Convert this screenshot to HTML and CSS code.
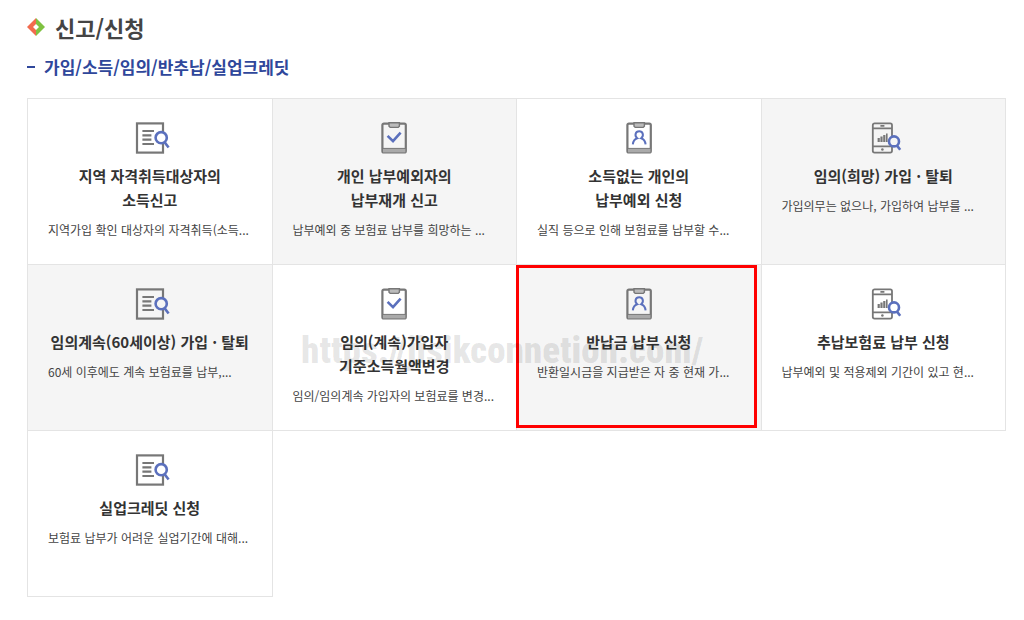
FILE: index.html
```html
<!DOCTYPE html>
<html lang="ko">
<head>
    <meta charset="UTF-8">
    <meta name="viewport" content="width=device-width, initial-scale=1.0">
    <title>신고/신청</title>
    <link rel="stylesheet" href="styles.css">
</head>
<body>
    <!-- icon set -->
    <svg class="sprite" aria-hidden="true">
        <symbol id="icon-search" viewBox="0 0 40 34">
            <rect class="line" x="7" y="2.4" width="26" height="29.2" />
            <path class="line" d="M12.4 10h11.6M12.4 14.3h9M12.4 18.6h9M12.4 23h11.6" />
            <circle class="accent lens" cx="31.2" cy="16.7" r="5.6" />
            <path class="accent" d="M34.6 21.2l4 5.4" />
        </symbol>
        <symbol id="icon-check" viewBox="0 0 40 34">
            <rect class="line" x="8.4" y="2.6" width="23.4" height="28.8" rx="1.5" />
            <rect class="base" x="9" y="27.4" width="22.4" height="4" />
            <path class="line thin" d="M8.4 27.4h23.4" />
            <path class="line clip" d="M15 1.8h10.4v3.4l-1.2 1.2h-8l-1.2-1.2z" />
            <path class="accent" d="M13.6 14.8l5.4 5.4 7.6-8.6" />
        </symbol>
        <symbol id="icon-person" viewBox="0 0 40 34">
            <rect class="line" x="8.4" y="2.6" width="23.4" height="28.8" rx="1.5" />
            <rect class="base" x="9" y="27.4" width="22.4" height="4" />
            <path class="line thin" d="M8.4 27.4h23.4" />
            <path class="line clip" d="M15 1.8h10.4v3.4l-1.2 1.2h-8l-1.2-1.2z" />
            <path class="accent fine" d="M13.8 23.4c.4-3.6 1.8-5.4 4.4-6.2-3-2.4-1.8-7 2-7s5 4.6 2 7c2.6.8 4 2.6 4.4 6.2" />
        </symbol>
        <symbol id="icon-mobile" viewBox="0 0 40 34">
            <rect class="line phone" x="9.8" y="2.4" width="19.2" height="29.2" rx="1.8" />
            <path class="line phone" d="M10 7.4h19M10 25.4h19M17.4 4.9h4" />
            <circle class="dot" cx="19.4" cy="28.5" r="1.3" />
            <path class="bars" d="M14.6 17h2.2v4h-2.2zM17.4 15.4h2.2v5.6h-2.2zM20.2 14h2.2v7h-2.2zM23 12.6h1.6v8.4h-1.6z" />
            <circle class="accent lens" cx="31" cy="20.4" r="5" />
            <path class="accent" d="M34 24.6l3.2 4.2" />
        </symbol>
    </svg>

    <main class="container">
        <h1 class="page-title">
            <svg class="title-mark" viewBox="0 0 18 18" aria-hidden="true">
                <path fill="#f26b4e" d="M9 0L0 9l9 9z" />
                <path fill="#7fc241" d="M9 0l9 9-9 9z" />
                <path fill="#fff" d="M9 6l3 3-3 3-3-3z" />
            </svg>
            신고/신청
        </h1>
        <h2 class="sub-title">가입/소득/임의/반추납/실업크레딧</h2>

        <div class="board">
            <ul class="menu">
                <li class="card">
                    <a href="#">
                        <svg class="icon" aria-hidden="true"><use href="#icon-search" /></svg>
                        <strong>지역 자격취득대상자의<br>소득신고</strong>
                        <span>지역가입 확인 대상자의 자격취득(소득...</span>
                    </a>
                </li>
                <li class="card">
                    <a href="#">
                        <svg class="icon" aria-hidden="true"><use href="#icon-check" /></svg>
                        <strong>개인 납부예외자의<br>납부재개 신고</strong>
                        <span>납부예외 중 보험료 납부를 희망하는 ...</span>
                    </a>
                </li>
                <li class="card">
                    <a href="#">
                        <svg class="icon" aria-hidden="true"><use href="#icon-person" /></svg>
                        <strong>소득없는 개인의<br>납부예외 신청</strong>
                        <span>실직 등으로 인해 보험료를 납부할 수...</span>
                    </a>
                </li>
                <li class="card">
                    <a href="#">
                        <svg class="icon" aria-hidden="true"><use href="#icon-mobile" /></svg>
                        <strong>임의(희망) 가입 · 탈퇴</strong>
                        <span>가입의무는 없으나, 가입하여 납부를 ...</span>
                    </a>
                </li>
                <li class="card">
                    <a href="#">
                        <svg class="icon" aria-hidden="true"><use href="#icon-search" /></svg>
                        <strong>임의계속(60세이상) 가입 · 탈퇴</strong>
                        <span>60세 이후에도 계속 보험료를 납부,...</span>
                    </a>
                </li>
                <li class="card">
                    <a href="#">
                        <svg class="icon" aria-hidden="true"><use href="#icon-check" /></svg>
                        <strong>임의(계속)가입자<br>기준소득월액변경</strong>
                        <span>임의/임의계속 가입자의 보험료를 변경...</span>
                    </a>
                </li>
                <li class="card selected">
                    <a href="#">
                        <svg class="icon" aria-hidden="true"><use href="#icon-person" /></svg>
                        <strong>반납금 납부 신청</strong>
                        <span>반환일시금을 지급받은 자 중 현재 가...</span>
                    </a>
                </li>
                <li class="card">
                    <a href="#">
                        <svg class="icon" aria-hidden="true"><use href="#icon-mobile" /></svg>
                        <strong>추납보험료 납부 신청</strong>
                        <span>납부예외 및 적용제외 기간이 있고 현...</span>
                    </a>
                </li>
                <li class="card">
                    <a href="#">
                        <svg class="icon" aria-hidden="true"><use href="#icon-search" /></svg>
                        <strong>실업크레딧 신청</strong>
                        <span>보험료 납부가 어려운 실업기간에 대해...</span>
                    </a>
                </li>
            </ul>
            <div class="watermark">https://jisikconnetion.com/</div>
        </div>
    </main>
</body>
</html>
```

FILE: styles.css
```css
body {
    font-family: 'Noto Sans CJK KR', sans-serif;
    margin: 0;
    min-height: 100vh;
    background-color: #fff;
    color: #333;
}
.sprite {
    position: absolute;
    width: 0;
    height: 0;
}
.container {
    padding: 11px 18px 20px 27px;
}
.page-title {
    display: flex;
    align-items: center;
    gap: 10px;
    margin: 0;
    font-size: 22px;
    line-height: 32px;
    color: #444;
}
.title-mark {
    width: 18px;
    height: 18px;
}
.sub-title {
    display: flex;
    align-items: center;
    gap: 9px;
    margin: 11px 0 18px;
    font-size: 17px;
    line-height: 26px;
    color: #2f479b;
}
.sub-title::before {
    content: "";
    width: 8px;
    height: 2px;
    background-color: #2f479b;
}
.board {
    position: relative;
}
.menu {
    display: grid;
    grid-template-columns: repeat(4, 1fr);
    margin: 0;
    padding: 0 0 1px 1px;
    list-style: none;
}
.card {
    --card-bg: #fff;
    position: relative;
    min-height: 167px;
    margin-left: -1px;
    margin-bottom: -1px;
    border: 1px solid #e4e4e4;
    box-sizing: border-box;
    background-color: var(--card-bg);
}
.card:nth-child(2),
.card:nth-child(4),
.card:nth-child(5),
.card:nth-child(7) {
    --card-bg: #f5f5f5;
}
.card a {
    display: flex;
    flex-direction: column;
    align-items: center;
    padding: 22px 20px 20px;
    color: #333;
    text-decoration: none;
}
.icon {
    width: 40px;
    height: 34px;
    margin-bottom: 9px;
}
.card strong {
    font-size: 15px;
    line-height: 24px;
    text-align: center;
    white-space: nowrap;
}
.card span {
    align-self: stretch;
    margin-top: 6px;
    font-size: 12px;
    line-height: 24px;
    color: #444;
    white-space: nowrap;
}
.selected::after {
    content: "";
    position: absolute;
    inset: 0 4px 2px -1px;
    border: 3px solid #f00;
}
.watermark {
    position: absolute;
    top: 47%;
    left: 28%;
    font-family: Impact, 'Roboto Condensed', Roboto, sans-serif;
    font-size: 37px;
    font-weight: 900;
    line-height: 36px;
    color: rgba(0, 0, 0, 0.1);
    pointer-events: none;
}

/* icons */
.line {
    fill: none;
    stroke: #777;
    stroke-width: 2.2;
}
.thin {
    stroke-width: 1;
}
.phone {
    stroke-width: 1.8;
}
.base {
    fill: #aaa;
}
.clip {
    fill: #bbb;
    stroke-width: 1.4;
}
.dot,
.bars {
    fill: #777;
}
.accent {
    fill: none;
    stroke: #5b70bd;
    stroke-width: 2.6;
}
.fine {
    stroke-width: 2;
}
.lens {
    fill: var(--card-bg);
}
```
